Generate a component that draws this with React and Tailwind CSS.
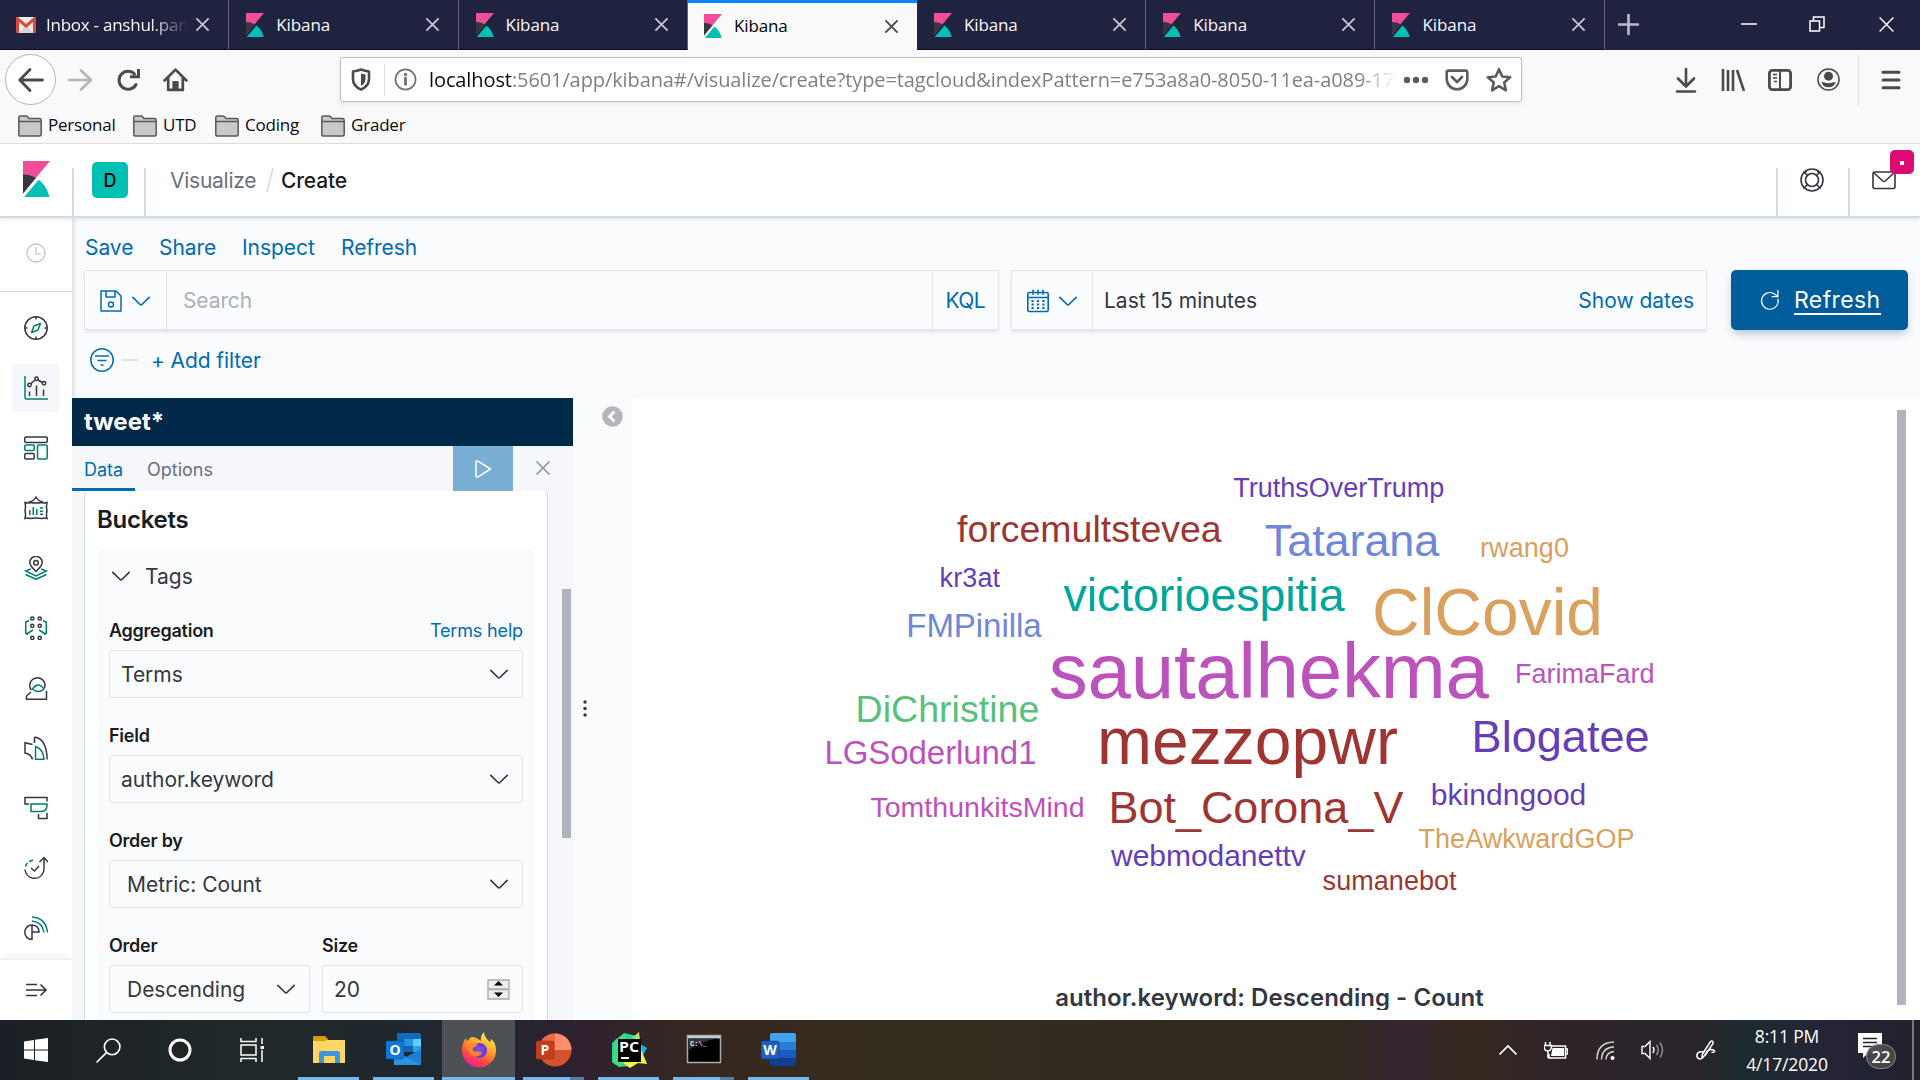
import React from "react";

const INK = "#343741";
const TEAL = "#017d73";

function KibanaMark({ className }) {
  return (
    <svg className={className} viewBox="4 0 25 32" preserveAspectRatio="none">
      <path fill="#f04e98" d="M4 0v28.789L28.935.017H4z" />
      <path fill="#343741" d="M4 12v16.789l11.906-13.738A24.721 24.721 0 004 12" />
      <path fill="#00bfb3" d="M18.479 16.664L6.268 30.754l-1.073 1.237h23.191c-1.252-6.292-4.883-11.719-9.908-15.327" />
    </svg>
  );
}

function Gmail() {
  return (
    <svg className="h-4 w-5 shrink-0" viewBox="0 0 20 16">
      <rect width="20" height="16" rx="1.5" fill="#eceaea" />
      <path d="M3 16 10 8l7 8z" fill="#d6d4d4" />
      <path d="M1.5 16V1.8L10 9l8.500-7.200V16" fill="none" stroke="#d54b3d" strokeWidth="3" />
    </svg>
  );
}

function Cross({ className, width = 2 }) {
  return (
    <svg className={className} viewBox="0 0 16 16" fill="none" stroke="currentColor" strokeWidth={width}>
      <path d="M1.500 1.500l13 13M14.500 1.500l-13 13" />
    </svg>
  );
}

function Caret({ className }) {
  return (
    <svg className={className} viewBox="0 0 16 16" fill="currentColor">
      <path d="M13.069 5.157L8.384 9.768a.546.546 0 01-.768 0L2.93 5.158a.552.552 0 00-.771 0 .53.53 0 000 .759l4.684 4.61a1.65 1.65 0 002.312 0l4.684-4.61a.53.53 0 000-.76.552.552 0 00-.771 0z" />
    </svg>
  );
}

function Icon({ children, className = "size-6", box = "0 0 24 24", sw = 1.5, color = "currentColor" }) {
  return (
    <svg className={className} viewBox={box} fill="none" stroke={color} strokeWidth={sw}>
      {children}
    </svg>
  );
}

function Tab({ active, mail }) {
  if (active)
    return (
      <div className="flex h-[50px] w-[229px] items-center border-t-[3px] border-[#0a84ff] bg-[#f9f9fa] pr-[18px] pb-[1px] pl-4 text-black">
        <KibanaMark className="h-6 w-[18px]" />
        <span className="ml-3 flex-1 tracking-[-0.1px]">Kibana</span>
        <Cross className="size-[15px] text-[#4a4a4f]" />
      </div>
    );
  return (
    <div className="flex h-[50px] w-[229.300px] items-center border-r border-b border-r-[#63657c] border-b-[#0c0d22] pr-[18px] pl-4 text-[#f9f9fa]">
      {mail ? <Gmail /> : <KibanaMark className="ml-px h-6 w-[18px]" />}
      {mail ? (
        <span className="ml-[10px] w-[142px] overflow-hidden tracking-[-0.25px] whitespace-nowrap [mask-image:linear-gradient(to_right,black_105px,transparent_142px)]">
          Inbox - anshul.pandey
        </span>
      ) : (
        <span className="ml-3 flex-1 tracking-[-0.1px]">Kibana</span>
      )}
      <Cross className={mail ? "ml-[7px] size-[15px] shrink-0 text-[#c3c4cf]" : "size-[15px] text-[#c3c4cf]"} />
    </div>
  );
}

function Folder({ name, className }) {
  return (
    <div className={className}>
      <svg className="h-[22px] w-6" viewBox="0 0 24 22" fill="#c9c9cb" stroke="#58585c" strokeWidth="1.500">
        <path d="M.8 19.500V2.500Q.8 1 2.300 1H8q1 0 1.500.8L11 3.500h10.500q1.700 0 1.700 1.700v14.300q0 1.500-1.700 1.500H2.500Q.8 21 .8 19.500z" />
        <path d="M1 6.500h22" />
      </svg>
      <span className="mt-[-1px] ml-[6px]">{name}</span>
    </div>
  );
}

function BrowserToolbar() {
  return (
    <div className="flex h-[94px] flex-col border-b border-[#dedee0] bg-[#f9f9fa] text-[#4a4a4f]">
      <div className="flex h-[59px] items-center pl-[5px]">
        <div className="flex size-[51px] items-center justify-center rounded-full border border-[#b4b4b6] bg-white">
          <Icon sw={2.800} className="size-7" box="0 0 28 28"><path strokeLinecap="round" strokeLinejoin="round" d="M25.500 14H3M13 3.500 2.800 14 13 24.500" /></Icon>
        </div>
        <Icon sw={2.600} className="ml-[11px] size-[26px] text-[#b5b5b7]" box="0 0 26 26"><path strokeLinecap="round" strokeLinejoin="round" d="M2 13h22M14 3.500 24 13 14 22.500" /></Icon>
        <Icon sw={3} className="ml-[23px] size-6"><path d="M20 16.500a9 9 0 1 1-1.500-10.500" strokeLinecap="round" /><path d="M14 8.800h8.500V1" /></Icon>
        <Icon sw={2.600} className="ml-[23px] size-[25px]"><path strokeLinejoin="round" strokeLinecap="round" d="M1.500 13 12 2.500 22.500 13M5 11v11h14V11" /><path fill="currentColor" stroke="none" d="M9 22v-8.500h6V22z" /></Icon>
        <div className="ml-[152px] flex h-[45px] w-[1182px] items-center rounded-[3px] border border-[#bcbcbe] bg-white pl-[10px] shadow-[0_2px_5px_rgba(0,0,0,0.07)]">
          <Icon sw={2.600} className="h-[23px] w-5" box="0 0 20 23"><path d="M2 3.500Q6 3 10 1.600 14 3 18 3.500V11q0 7-8 10.500Q2 18 2 11z" strokeLinejoin="round" /><path fill="currentColor" stroke="none" d="M10 5.500 14.500 6.500V11q0 4.500-4.500 7z" /></Icon>
          <div className="ml-[13px] h-8 w-px bg-[#dcdcde]" />
          <Icon sw={1.800} className="ml-[9px] size-[23px] text-[#737376]"><circle cx="12" cy="12" r="10.500" /><path d="M12 10.500V17" strokeWidth="3" strokeLinecap="round" /><circle cx="12" cy="6.700" r="1.800" fill="currentColor" stroke="none" /></Icon>
          <div className="ml-3 w-[966px] overflow-hidden text-[20px] tracking-[-0.1px] whitespace-nowrap text-[#7f7f82] [mask-image:linear-gradient(to_right,black_930px,transparent_966px)]">
            <span className="text-[#0c0c0d]">localhost</span>:5601/app/kibana#/visualize/create?type=tagcloud&amp;indexPattern=e753a8a0-8050-11ea-a089-17
          </div>
          <Icon className="ml-[8px] h-2 w-[26px] text-[#5c5c60]" box="0 0 26 8"><g fill="currentColor" stroke="none"><circle cx="4" cy="4" r="3.200" /><circle cx="13" cy="4" r="3.200" /><circle cx="22" cy="4" r="3.200" /></g></Icon>
          <Icon sw={2.600} className="ml-4 h-[22px] w-6 text-[#5c5c60]" box="0 0 24 22"><path strokeLinejoin="round" d="M3.500 1.600h17q1.800 0 1.800 1.800V10a10.300 10.300 0 0 1-20.600 0V3.400q0-1.800 1.800-1.800z" /><path strokeLinecap="round" strokeLinejoin="round" d="M7 8l5 5 5-5" /></Icon>
          <Icon sw={2.400} className="ml-[17px] size-[26px] text-[#5c5c60]"><path strokeLinejoin="round" d="M12 2l3 6.700 7.300.7-5.500 4.900 1.600 7.200L12 17.700l-6.400 3.800 1.600-7.200-5.500-4.900L9 8.700z" /></Icon>
        </div>
        <Icon sw={2.600} className="ml-[151px] size-[26px]" box="0 0 24 26"><path strokeLinecap="round" strokeLinejoin="round" d="M12 2v17M4 11.500 12 19.500 20 11.500M3 24.500h18" /></Icon>
        <Icon sw={2.600} className="ml-[22px] h-[22px] w-6" box="0 0 24 22"><path d="M2 0v22M7 1v21M12 1v21M16 1l7 21" /></Icon>
        <Icon sw={2.800} className="ml-[23px] h-[22px] w-6" box="0 0 24 22"><rect x="1.400" y="1.400" width="21.200" height="19.200" rx="3" /><path d="M12 1v20" strokeWidth="2" /><path d="M5 5.500h4M5 9h4M6 12.500h3" strokeWidth="1.500" /></Icon>
        <Icon sw={1.600} className="ml-[25px] size-[23px]"><circle cx="12" cy="12" r="11" /><circle cx="12" cy="8.500" r="4.700" fill="currentColor" stroke="none" /><path d="M4.500 14.500q2 0 3.500.5 4 1.600 8 0 1.500-.5 3.500-.5-1.500 5.500-7.500 5.500t-7.500-5.500z" fill="currentColor" stroke="none" /></Icon>
        <div className="ml-[18px] h-[50px] w-px bg-[#dcdcde]" />
        <Icon sw={3} className="ml-[22px] h-5 w-5" box="0 0 20 20"><path strokeLinecap="round" d="M2 2.200h16M2 10h16M2 17.800h16" /></Icon>
      </div>
      <div className="flex h-[33px] items-center pl-[18px] text-[17px] tracking-[-0.2px] text-[#0c0c0d]">
        <Folder name="Personal" className="flex w-[115px] items-center" />
        <Folder name="UTD" className="flex w-[82px] items-center" />
        <Folder name="Coding" className="flex w-[106px] items-center" />
        <Folder name="Grader" className="flex items-center" />
      </div>
    </div>
  );
}

function KibanaHeader() {
  return (
    <header className="relative z-10 flex h-[74px] shrink-0 items-end border-b-2 border-[#d3dae6] bg-white font-['Inter',sans-serif] text-[#343741] shadow-[0_2px_3px_rgba(152,162,179,0.2)]">
      <div className="flex h-12 w-[74px] items-start border-r-2 border-[#d3dae6] pl-[23px]"><KibanaMark className="mt-[-7px] h-9 w-[27px]" /></div>
      <div className="flex h-12 w-[72px] items-start border-r-2 border-[#d3dae6] pl-[18px]">
        <div className="mt-[-6px] flex size-9 items-center justify-center rounded-[5px] bg-[#00bfb3] text-[18px] font-medium text-black">D</div>
      </div>
      <div className="flex h-12 flex-1 items-start pl-6 text-[21px] leading-[26px] tracking-[-0.25px]">
        <span className="w-[94px] text-[#69707d]">Visualize</span>
        <Icon className="mx-[2px] h-6 w-[8px]" box="0 0 8 24" color="#d3dae6"><path d="M7 0 1 24" /></Icon>
        <span className="ml-[5px] font-medium tracking-[-0.15px] text-[#1a1c21]">Create</span>
      </div>
      <div className="h-12 w-[72px] border-l-2 border-[#d3dae6] pl-[22px]">
        <Icon sw={1.600}><circle cx="12" cy="12" r="11" /><circle cx="12" cy="12" r="6.500" /><path d="M6.500 2.500 5 5l3 3M17.500 2.500 19 5l-3 3M5 19l3-3M19 19l-3-3M3.500 3.500 8 8M20.500 3.500 16 8M3.500 20.500 8 16M20.500 20.500 16 16" /></Icon>
      </div>
      <div className="relative h-12 w-[72px] border-l-2 border-[#d3dae6] pl-[22px]">
        <Icon sw={1.600}><rect x="1" y="4" width="22" height="16.500" rx="1.500" /><path d="M2 5l8.800 8q1.200 1 2.400 0L22 5" /></Icon>
        <div className="absolute -top-[18px] left-[40px] flex size-6 items-center justify-center rounded-[5px] bg-[#dd0a73]"><i className="mt-[2px] size-1 bg-white" /></div>
      </div>
    </header>
  );
}

const apps = [
  <g key="c"><circle cx="12" cy="12" r="11.200" /><path d="M12 1v2.500M12 20.500V23M1 12h2.500M20.500 12H23" /><path stroke={TEAL} strokeLinejoin="round" d="M16.500 7.500 10 10l-2.500 6.500L14 14z" /></g>,
  <g key="v"><path stroke={TEAL} d="M1 0v21.500q0 1.500 1.500 1.500H24" /><path d="M5.500 15.500V20M12.500 9.500V20M19.500 13.500V20M6.500 8 11 4M14 4l4.500 2.500" /><circle cx="5.500" cy="9" r="1.700" /><circle cx="12.500" cy="2.700" r="1.700" /><circle cx="20" cy="7.200" r="1.700" /></g>,
  <g key="d"><rect x=".8" y="1" width="22.400" height="5.500" rx="1" /><g stroke={TEAL}><rect x=".8" y="9" width="9.400" height="5.500" rx="1" /><rect x="13.500" y="9" width="9.700" height="14" rx="1" /></g><rect x=".8" y="17.500" width="9.400" height="5.500" rx="1" /></g>,
  <g key="w"><path d="M1 6.500q3 1 5 0 6 1 12 0 2 1 5 0-1 4 0 8-1 4 0 8-3-1-5 0-6-1-12 0-2-1-5 0 1-4 0-8 1-4 0-8zM5 6q5-1 7-5 2 4 7 5" /><path stroke={TEAL} d="M5.800 14v5M9.300 11v8M12.800 13v6M16 12h3M16 15.200h3M16 18.300h3" /></g>,
  <g key="m"><path d="M12 15.500Q5.800 9.500 5.800 6.500a6.200 6.200 0 0 1 12.400 0q0 3-6.200 9z" /><circle cx="12" cy="6.700" r="2.300" /><path stroke={TEAL} d="M7 13 1.500 15 12 20l10.500-5L17 13M1.500 18.500 12 23.300l10.500-4.800" /></g>,
  <g key="l"><circle cx="8.300" cy="2.500" r="1.600" /><circle cx="15.700" cy="2.500" r="1.600" /><circle cx="8.300" cy="9.800" r="1.600" /><circle cx="15.700" cy="9.800" r="1.600" /><circle cx="8.300" cy="21.800" r="1.600" /><circle cx="15.700" cy="21.800" r="1.600" /><path stroke={TEAL} d="M5 4.500 1.700 6.300v11L4 18.500M9 14l-6.500 4M19 4.500l3.300 1.800v11L20 18.500M15 14l6.500 4" /></g>,
  <g key="s"><path d="M7.300 14A7.600 7.600 0 1 1 20.500 12M7 16l-4.500 4v3.200h20V15" /><path stroke={TEAL} d="M8.500 13q5.500-8 11.500 0-5.500 5-11.500 0z" /></g>,
  <g key="a"><path d="M10.500 1q12 1.500 12.700 22.500M10.500 1v6M8.500 8.500 1 6.800V17q6 1 7.500 6.500" /><path stroke={TEAL} d="M11.500 10.500q8 3 8.500 12.700h-8.500z" /></g>,
  <g key="u"><path d="M5 8H1V1.500h22v4M14.500 18v4.500H23V17" /><path stroke={TEAL} d="M7 8h16v2q-.5 5.500-6 5.500H7z" /></g>,
  <g key="t"><path d="M1 13.500A9.500 9.500 0 0 0 19 17q1-2 1-5V2M15.500 6 20 1.500 24 6M7 12l3.500 3 4.500-5" /><path stroke={TEAL} strokeDasharray="4 2.500" d="M1.500 10.500Q3 5 10 4" /></g>,
  <g key="o"><path d="M8 9a7 7 0 1 0 0 14.500zM8 16h7q0-6.500-7-7" /><path stroke={TEAL} d="M8 1q14 1 15.500 15.500M8 5q10.500 1 12 11.500" /></g>,
];

function Sidebar() {
  return (
    <nav className="flex w-[72px] shrink-0 flex-col bg-white text-[#343741] shadow-[2px_0_4px_rgba(152,162,179,0.35)]">
      <div className="flex h-[74px] items-center justify-center border-b border-[#d3dae6] pb-[3px]">
        <Icon className="mr-[1px] size-5 text-[#c2c3c6]" sw={1.600}><circle cx="12" cy="12" r="10.800" /><path d="M12 5v8h5.500" /></Icon>
      </div>
      <div className="flex flex-1 flex-col items-center gap-3 pt-3">
        {apps.map((a, i) => (
          <div key={i} className={i === 1 ? "flex size-12 shrink-0 items-center justify-center rounded-md bg-[#f5f7fa]" : "flex size-12 shrink-0 items-center justify-center"}>
            <Icon color={INK}>{a}</Icon>
          </div>
        ))}
      </div>
      <div className="flex h-[61px] items-center justify-center border-t border-[#eceef2] shadow-[0_-3px_6px_rgba(152,162,179,0.12)]">
        <Icon color={INK} sw={1.600}><path d="M2 6.500h11M2 12h20M2 17.500h11M16.500 6.500 22 12l-5.500 5.500" /></Icon>
      </div>
    </nav>
  );
}

function QueryBar() {
  return (
    <div className="h-[180px] shrink-0 pl-3">
      <div className="flex h-[52px] items-center pt-[7px] text-[21px] tracking-[-0.05px] text-[#006bb4]">
        <span className="ml-px w-[74px]">Save</span>
        <span className="w-[83px]">Share</span>
        <span className="w-[99px]">Inspect</span>
        <span>Refresh</span>
      </div>
      <div className="flex h-[60px] text-[21px]">
        <div className="flex w-[915px] items-center border border-[#e0e4ee] bg-[#fbfcfe] text-[#006bb4] shadow-[0_3px_3px_-1px_rgba(152,162,179,0.28)]">
          <div className="flex h-[57px] w-[82px] items-center self-end border-r border-[#e0e4ee] pl-[14px]">
            <Icon sw={1.500}><path d="M2 2h15l5 5v15H2zM7 2v6h9V2" strokeLinejoin="round" /><circle cx="12" cy="15.500" r="2.500" /></Icon>
            <Caret className="ml-[6px] size-6" />
          </div>
          <span className="mt-[2px] flex-1 pl-4 tracking-[-0.1px] text-[#abb0b9]">Search</span>
          <div className="flex h-[57px] items-center self-end border-l border-[#e0e4ee] pr-[13px] pl-3 tracking-[-0.6px]">KQL</div>
        </div>
        <div className="ml-3 flex w-[696px] items-center border border-[#e0e4ee] bg-[#fbfcfe] text-[#006bb4] shadow-[0_3px_3px_-1px_rgba(152,162,179,0.28)]">
          <div className="flex h-[57px] w-[81px] items-center self-end border-r border-[#e0e4ee] pl-[14px]">
            <Icon sw={1.600}><rect x="1.800" y="3.500" width="20.400" height="19" rx="1.500" /><path d="M1.800 8.500h20.400M7 .8v5M12 .8v5M17 .8v5" /><path d="M5.500 12h13M5.500 15.500h13M5.500 19h13" strokeWidth="2" strokeDasharray="2.200 3.200" /></Icon>
            <Caret className="ml-[6px] size-6" />
          </div>
          <span className="mt-[2px] flex-1 pl-[11px] text-[#343741]">Last 15 minutes</span>
          <span className="mt-[2px] pr-[12px] tracking-[-0.02px]">Show dates</span>
        </div>
        <div className="ml-6 flex w-[177px] items-center rounded-[5px] bg-[#005c9b] pl-[29px] text-white shadow-[0_5px_10px_-2px_rgba(54,97,126,0.4)]">
          <Icon sw={1.400} className="size-5"><path d="M21.500 10.500A10 10 0 1 1 17 4.500l4 3M21.500 0v8H14" /></Icon>
          <span className="mt-[2px] ml-[14px] border-b-2 border-white text-[23px] leading-[25px] tracking-[0.4px]">Refresh</span>
        </div>
      </div>
      <div className="flex h-[60px] items-center text-[21px] text-[#006bb4]">
        <Icon className="ml-[6px] size-6"><circle cx="12" cy="12" r="11.200" /><path d="M5 8h14M7.500 12.500h9M10.500 17h3" /></Icon>
        <div className="ml-2 h-[2px] w-[16px] bg-[#dde1ea]" />
        <span className="mt-[2px] ml-[13px] tracking-[-0.1px]">+ Add filter</span>
      </div>
    </div>
  );
}

function Select({ children, className }) {
  return (
    <div className={"mt-[7px] flex h-12 items-center rounded-[3px] border border-[#dfe3ec] bg-[#fbfcfd] pr-[11px] text-[21px] text-[#343741] " + className}>
      <span className="mt-[2px] flex-1 tracking-[-0.02px]">{children}</span>
      <Caret className="size-6" />
    </div>
  );
}

function Editor() {
  return (
    <section className="flex w-[501px] shrink-0 flex-col bg-[#f5f7fa]">
      <div className="flex h-12 shrink-0 items-center bg-[#002a48] pl-3 text-[24px] font-bold text-white">tweet*</div>
      <div className="flex h-[45px] shrink-0 text-[18px]">
        <div className="flex w-[63px] items-center border-b-[3px] border-[#006bb4] pt-[5px] pl-3 text-[#006bb4]">Data</div>
        <div className="flex flex-1 items-center pt-[2px] pl-3 text-[#69707d]">Options</div>
        <div className="flex w-[60px] items-center justify-center bg-[#79aed5] text-white">
          <Icon sw={1.500} className="size-[18px]" box="0 0 18 18"><path strokeLinejoin="round" d="M2 1.500v15q1 1 2 .3L16.500 9 4 1.200Q3 .5 2 1.500z" /></Icon>
        </div>
        <div className="flex w-[60px] items-center justify-center pb-px"><Cross width={1.600} className="size-4 text-[#8f939b]" /></div>
      </div>
      <div className="flex flex-1 overflow-hidden pl-3">
        <div className="w-[464px] shrink-0 rounded-t border-x border-[#d3dae6] bg-white px-3">
          <div className="h-[58px] pt-[13px] text-[24px] leading-8 font-semibold tracking-[-0.25px] text-[#1a1c21]">Buckets</div>
          <div className="h-[480px] rounded-md bg-[#fafbfd] px-3 text-[18px] leading-6 font-semibold tracking-[-0.25px] text-[#1a1c21]">
            <div className="flex h-[54px] items-center text-[21px] font-normal tracking-normal text-[#343741]"><Caret className="size-6" /><span className="mt-[2px] ml-3">Tags</span></div>
            <div className="mt-4 flex justify-between"><span>Aggregation</span><span className="font-normal tracking-[-0.15px] text-[#006bb4]">Terms help</span></div>
            <Select className="pl-[11px] font-normal">Terms</Select>
            <div className="mt-[26px]">Field</div>
            <Select className="pl-[11px] font-normal">author.keyword</Select>
            <div className="mt-[26px]">Order by</div>
            <Select className="pl-[17px] font-normal">Metric: Count</Select>
            <div className="mt-[26px] flex">
              <div className="w-[201px]">Order<Select className="pl-[17px] font-normal">Descending</Select></div>
              <div className="ml-3 w-[201px]">Size
                <div className="mt-[7px] flex h-12 items-center rounded-[3px] border border-[#dfe3ec] bg-[#fbfcfd] pr-3 pl-[11px] text-[21px] font-normal tracking-normal text-[#343741]">
                  <span className="mt-[2px] flex-1">20</span>
                  <svg className="h-[21px] w-[23px]" viewBox="0 0 23 21"><path d="M1 1h21v9H1zM1 10.500h21V20H1z" fill="#eee" stroke="#a9a9a9" strokeWidth="1.300" /><path d="M7 6.500 11.500 2 16 6.500zM7 13.500l4.500 4.500 4.500-4.500z" fill="#000" /></svg>
                </div>
              </div>
            </div>
          </div>
        </div>
        <div className="mt-[98px] ml-[14px] h-[249px] w-[9px] bg-[#afb3bb]" />
      </div>
    </section>
  );
}

const words = [
  ["TruthsOverTrump", 1233.3, 497, 27, "#663db8", 211],
  ["forcemultstevea", 957, 542, 37.5, "#9e3533", 264.7],
  ["Tatarana", 1264.800, 556, 45, "#6f87d8", 174.5],
  ["rwang0", 1480, 557, 27, "#daa05d", 89],
  ["kr3at", 939.600, 587, 27, "#663db8", 60.500],
  ["victorioespitia", 1063.500, 611, 46.5, "#00a69b", 281],
  ["FMPinilla", 906.300, 637, 33, "#6f87d8", 135.300],
  ["ClCovid", 1372, 635, 66, "#daa05d", 231],
  ["sautalhekma", 1048.800, 698, 78, "#bc52bc", 440],
  ["FarimaFard", 1515, 682.500, 27, "#bc52bc", 139.5],
  ["DiChristine", 855.500, 722, 37.5, "#57c17b", 183.800],
  ["mezzopwr", 1096.900, 764, 66, "#9e3533", 301],
  ["Blogatee", 1471.600, 752, 45, "#663db8", 178],
  ["LGSoderlund1", 824.500, 764, 33, "#bc52bc", 212],
  ["TomthunkitsMind", 870.400, 817, 28.5, "#bc52bc", 214.2],
  ["Bot_Corona_V", 1108.400, 823, 45, "#9e3533", 295],
  ["bkindngood", 1430.700, 805, 30, "#663db8", 155.6],
  ["TheAwkwardGOP", 1418.500, 847.500, 27, "#daa05d", 216],
  ["webmodanettv", 1111, 866, 30, "#663db8", 194.800],
  ["sumanebot", 1322.600, 889.500, 27, "#9e3533", 134],
];

function TagCloud() {
  return (
    <section className="flex flex-1 bg-white">
      <div className="flex flex-1 flex-col items-center">
        <svg className="h-[582px] w-full font-['Liberation_Sans',Arial,sans-serif]" viewBox="633 398 1264 582">
          {words.map(([w, x, y, size, fill, len]) => (
            <text key={w} x={x} y={y} fontSize={size} fill={fill} textLength={len}>{w}</text>
          ))}
        </svg>
        <div className="mt-[3px] ml-[9px] h-[27px] overflow-hidden text-[24px] leading-[30px] font-semibold tracking-[0.05px] text-[#343741]">author.keyword: Descending - Count</div>
      </div>
      <div className="mt-3 mr-[14px] h-[595px] w-[9px] bg-[#b2b5bd]" />
    </section>
  );
}

function OfficeTile({ letter, from, to }) {
  return (
    <g>
      <rect x="0" y="9" width="18" height="18" rx="1.500" fill={from} stroke={to} strokeWidth=".6" />
      <text x="9" y="23" textAnchor="middle" fill="#fff" fontSize="14" fontWeight="700" fontFamily="Open Sans">{letter}</text>
    </g>
  );
}

const programs = [
  { k: "explorer", art: <g><path d="M2 5h12l3 3h17v23H2z" fill="#ffd561" /><path d="M2 5q0-1 1-1h11l3 3-3 2H2z" fill="#d99a06" /><path d="M2 9h32v20H2z" fill="#ffd566" /><path d="M8 31v-9q0-3 3-3h15q3 0 3 3v9h-5v-7H13v7z" fill="#3b96dd" /></g> },
  { k: "outlook", art: <g><path d="M11 1h22q2 0 2 2v15H11z" fill="#0f6cbd" /><path d="M18 7h9v8h-9z" fill="#2a92e0" /><path d="M27 7h8v8h-8z" fill="#5cd3fb" /><path d="M18 14h9v6h-9z" fill="#1066b5" /><path d="M27 14h8v6h-8z" fill="#2aa0ea" /><path d="M8 18l14 8 13-9v16H8z" fill="#2a93e4" /><path d="M35 17v16L20 25z" fill="#1b7fd2" /><OfficeTile letter="O" from="#0f78d4" to="#0a5ba8" /></g> },
  { k: "firefox", active: true, art: <g><defs><linearGradient id="fx" x1=".8" y1=".05" x2=".3" y2="1"><stop offset="0" stopColor="#fff44f" /><stop offset=".4" stopColor="#ffa02e" /><stop offset=".7" stopColor="#ff4f3d" /><stop offset="1" stopColor="#f0179a" /></linearGradient><radialGradient id="fp"><stop offset="0" stopColor="#8b4ff0" /><stop offset="1" stopColor="#5a3fc6" /></radialGradient></defs><path d="M23 0q-4 4-3 9-8-6-11-3L6 9q-1-1-1-3-4 5-4 12a17 17 0 0 0 34 1q0-9-5-12 0 3-1 3-6-5-6-10z" fill="url(#fx)" /><circle cx="18.500" cy="18.500" r="7.500" fill="url(#fp)" /><path d="M5 13q7-5 12 0l-5 3q-1 3 3 3.500 6 0 6 2-6 6-12 0-4-4-4-8.500z" fill="#ff8b27" opacity=".9" /></g> },
  { k: "ppt", split: true, art: <g><circle cx="19" cy="18" r="16.500" fill="#d35230" /><path d="M19 1.500a16.500 16.500 0 0 1 16.500 16.500H19z" fill="#ff8f6b" /><path d="M19 1.500A16.500 16.500 0 0 0 2.500 18H19z" fill="#ed6c47" /><OfficeTile letter="P" from="#c43e1c" to="#a93217" /></g> },
  { k: "pycharm", art: <g><path d="M1 11 13 1l13 3 4 10-10 20-12 1-7-5z" fill="#22d78f" /><path d="M2 31 4 8l10-6 4 20-9 13z" fill="#3fdc80" /><path d="M21 6l7-6 1 8z" fill="#a5e868" /><path d="M28 11l8 5-5 9z" fill="#12b5ec" /><path d="M30 17l6 15-9-1-8 5-7-5z" fill="#f2f34c" /><rect x="7" y="7" width="23" height="23" fill="#000" /><text x="8" y="20" fontSize="14.500" fontWeight="700" fill="#fff" fontFamily="Open Sans" textLength="20" lengthAdjust="spacingAndGlyphs">PC</text><path d="M10 25h8v2h-8z" fill="#fff" /></g> },
  { k: "cmd", split: true, art: <g><rect x="1.500" y="3.500" width="33" height="27" fill="#000" stroke="#a5adb3" strokeWidth="1.500" /><path d="M2 4h32v2.500H2z" fill="#c6ccd2" /><path d="M2.500 6.500h31q-20 2-31 12z" fill="#343638" /><text x="4" y="13.500" fontSize="7" fill="#eee" fontFamily="Liberation Mono" fontWeight="700">C:\_</text></g> },
  { k: "word", art: <g><path d="M9 3q0-2 2-2h22q2 0 2 2v7H9z" fill="#41a5ee" /><path d="M9 10h26v8H9z" fill="#2b7cd3" /><path d="M9 18h26v8H9z" fill="#185abd" /><path d="M9 26h26v6q0 2-2 2H11q-2 0-2-2z" fill="#103f91" /><OfficeTile letter="W" from="#1f5fc4" to="#133f86" /></g> },
];

function Taskbar() {
  return (
    <footer className="flex h-[60px] shrink-0 items-center overflow-hidden bg-[linear-gradient(90deg,#1b2026_0%,#202829_12%,#1f2730_24%,#2e2130_30%,#35271f_36%,#352d20_45%,#30291f_70%,#342531_73%,#35291f_76%,#2d2429_82%,#2a242c_88%,#1c2a2e_91%,#242437_95%,#20222a_100%)] text-white">
      <div className="flex w-[72px] justify-center"><svg className="size-6" viewBox="0 0 24 24" fill="#fff"><path d="M0 3.500 10 2v9.500H0zM11 1.800 24 0v11.500H11zM0 12.500h10V22L0 20.500zM11 12.500h13V24l-13-1.800z" /></svg></div>
      <div className="flex w-[72px] justify-center"><Icon sw={1.500} className="size-[25px]"><circle cx="15.500" cy="8.500" r="7.500" /><path d="M10 14 .5 23.500" /></Icon></div>
      <div className="flex w-[72px] justify-center"><Icon sw={3}><circle cx="12" cy="12" r="10" /></Icon></div>
      <div className="flex w-[71px] justify-center"><Icon sw={1.500}><path d="M1 0v3.500h15V0M1 7h15v10H1zM1 24v-3.500h15V24M22 0v6M22 12v12" /><path d="M20.500 8h3.500v3h-3.500z" fill="#fff" stroke="none" /></Icon></div>
      <div className="ml-1 flex h-full">
        {programs.map((p) => (
          <div key={p.k} className="flex w-[75px] justify-center">
            <div className={p.active ? "flex h-full w-[73px] flex-col items-center bg-[#4d5156]" : "flex h-full w-[61px] flex-col items-center"}>
              <svg className="mt-[12px] h-9 w-9 shrink-0" viewBox="0 0 36 36">{p.art}</svg>
              <div className="mt-[9px] flex h-[3px] w-full bg-[#76b9ed]">{p.split && <i className="ml-auto w-[14px] bg-[#53809f]" />}</div>
            </div>
          </div>
        ))}
      </div>
      <div className="ml-auto flex h-full items-center">
        <Icon sw={1.700} className="h-3 w-[18px]" box="0 0 18 12"><path d="M.5 10.500 9 2l8.500 8.500" /></Icon>
        <svg className="ml-[27px] h-[17px] w-6" viewBox="0 0 24 17" fill="none" stroke="#fff" strokeWidth="1.500"><path d="M7 4h14.500v12H5v-4M22 7h1.500v5H22M1.500 0v3M6 0v3M0 3.500h7.500Q7.500 9 3.700 9 0 9 0 3.500M4 9v7" /><path d="M8.500 6h11.500v8H7z" fill="#fff" stroke="none" /></svg>
        <Icon sw={1.500} className="ml-[28px] size-[19px]" box="0 0 19 19"><path d="M1 18.500Q1 1.500 18 1M5.500 18.500Q6 6.500 18 6M10 18.500Q10.500 11 18 10.500" opacity=".8" /><circle cx="16.500" cy="17" r="2" fill="#fff" stroke="none" /></Icon>
        <Icon sw={1.400} className="ml-[26px] h-5 w-6" box="0 0 24 20"><path d="M1 6.500h3L9 1.500v17l-5-5H1z" /><path d="M12 7q2 3 0 6" /><path d="M15.500 5q3.500 5 0 10M19 2.500q5 7.500 0 15" opacity=".5" /></Icon>
        <Icon sw={1.500} className="ml-[31px] size-5" box="0 0 20 20"><path d="M6.500 14 14.500 1.500q3-1.500 2.500 2L9 15.500l-3 2zM8 12q-6-1-7 2.500-.5 4 3 4.500 3 0 6-6 2.500-5 7.500-3 3 2-2 2.500" /></Icon>
        <div className="ml-[19px] w-[104px] text-center text-[17.500px] leading-[28px] tracking-[-0.15px]"><div>8:11 PM</div><div>4/17/2020</div></div>
        <svg className="ml-[19px] h-10 w-10" viewBox="0 0 40 40"><path d="M0 3h24v20H10l-5 5v-5H0z" fill="#fff" /><path d="M5 8.500h14M5 12.500h14M5 16.500h10" stroke="#222" strokeWidth="1.300" /><rect x="8.500" y="14.500" width="29" height="24" rx="12" fill="#48484c" fillOpacity=".95" stroke="#8c8c90" /><text x="23" y="32.500" textAnchor="middle" fill="#fff" fontSize="16.500" fontWeight="600" fontFamily="Open Sans">22</text></svg>
        <div className="mr-[6px] ml-[14px] h-full w-[2px] bg-[#77767c]" />
      </div>
    </footer>
  );
}

export default function App() {
  return (
    <div className="flex h-[1080px] w-[1920px] flex-col overflow-hidden bg-[#fafbfd] font-['Open_Sans','Noto_Sans',sans-serif]">
      <div className="flex h-[50px] shrink-0 bg-[#202340] text-[17px]">
        <Tab mail /><Tab /><Tab /><Tab active /><Tab /><Tab /><Tab />
        <Icon sw={3} className="mt-[14px] ml-[13px] size-[21px] text-[#b9bac6]"><path d="M12 0v24M0 12h24" /></Icon>
        <div className="mr-[25px] ml-auto flex items-start pt-4 text-white">
          <Icon sw={1.500} className="size-4" box="0 0 16 16"><path d="M0 8h16" /></Icon>
          <Icon sw={1.500} className="ml-[52px] size-4" box="0 0 16 16"><path d="M1 5h9.500v10H1zM4.500 4.500V1H15v10.500h-4" /></Icon>
          <Cross width={1.300} className="ml-[53px] size-[17px]" />
        </div>
      </div>
      <BrowserToolbar />
      <KibanaHeader />
      <div className="flex min-h-0 flex-1 font-['Inter',sans-serif]">
        <Sidebar />
        <main className="flex min-w-0 flex-1 flex-col">
          <QueryBar />
          <div className="flex min-h-0 flex-1">
            <Editor />
            <div className="flex w-[60px] shrink-0 justify-between pr-[10px] pl-[10px] text-[#343741]">
              <svg className="mt-[302px] h-[17px] w-[4px]" viewBox="0 0 4 17" fill="currentColor"><circle cx="2" cy="2" r="1.700" /><circle cx="2" cy="8.500" r="1.700" /><circle cx="2" cy="15" r="1.700" /></svg>
              <svg className="mt-[8px] size-[21px]" viewBox="0 0 21 21"><circle cx="10.500" cy="10.500" r="10.300" fill="#b4b6bb" /><path d="M12.500 5.500l-5 5 5 5" fill="none" stroke="#fff" strokeWidth="2.800" /></svg>
            </div>
            <TagCloud />
          </div>
        </main>
      </div>
      <Taskbar />
    </div>
  );
}
